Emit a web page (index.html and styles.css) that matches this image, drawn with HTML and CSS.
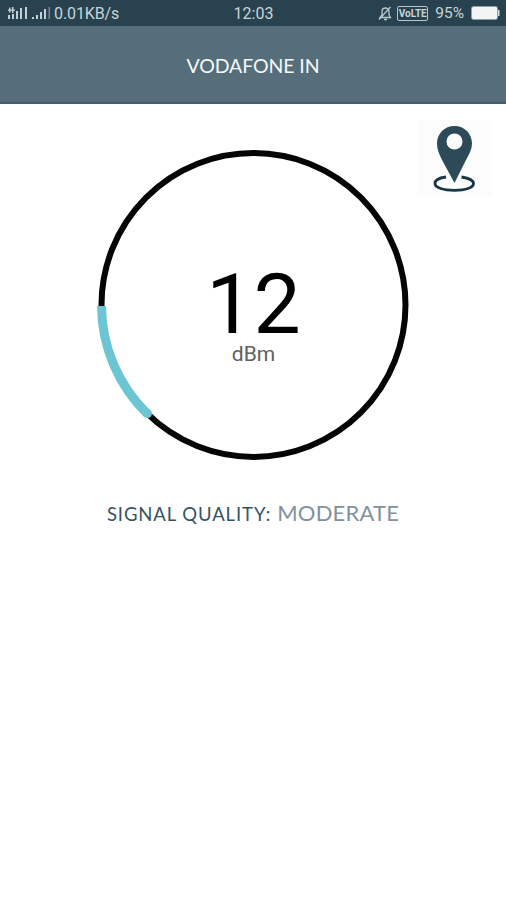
FILE: index.html
```
<!DOCTYPE html>
<html lang="en">
<head>
<meta charset="UTF-8">
<meta name="viewport" content="width=device-width, initial-scale=1.0">
<title>Signal Strength</title>
<link rel="stylesheet" href="styles.css">
</head>
<body>

<div class="status-bar">
  <div class="status-left">
    <svg class="signal-icons" width="43" height="14" viewBox="0 0 43 14" fill="#c3d0d5">
      <path d="M0 3.500h7v1.300H0zM1 1.500h1.500v5H1zM4 1h1.500v6H4zM0 9h2v4H0zM4 8h2v5H4zM8 5h2v8H8zM12 2h2v11h-2zM17 1h2v12h-2z"/>
      <path d="M24 11h2v2h-2zM28 9h2v4h-2zM32 6h2v7h-2zM36 3h2v10h-2z"/>
      <path d="M40.500 1H42v12h-1.500z" fill="#718891"/>
    </svg>
    <span class="speed">0.01KB/s</span>
  </div>
  <span class="clock">12:03</span>
  <div class="status-right">
    <svg width="14" height="15" viewBox="0 0 14 15" fill="none" stroke="#b9c7cc" stroke-width="1.3">
      <path d="M2 11.500h10.500L11 9V5.500C11 3.500 9.500 2 7.500 2S4 3.500 4 5.500V9zM6 13.500h3M1 13.500L12.500 1"/>
    </svg>
    <span class="volte">VoLTE</span>
    <span class="percent">95%</span>
    <svg class="battery" width="29" height="14" viewBox="0 0 29 14">
      <rect x="0.500" y="0.500" width="26" height="13" rx="2" fill="#f3f5f5" stroke="#8fa1a8"/>
      <path d="M27 4h1.500v6H27z" fill="#d5dde0"/>
    </svg>
  </div>
</div>

<div class="header">
  <h1>VODAFONE IN</h1>
</div>

<div class="container">
  <button class="map-btn" aria-label="Map">
    <svg width="74" height="75" viewBox="0 0 74 75">
      <path d="M28 57C20 58 17 60.500 17 63.500C17 67.800 25.500 70.300 36.500 70.300S55.500 67.800 55.500 63.500C55.500 60.500 51.500 58.300 43.500 57" fill="none" stroke="#193644" stroke-width="2.8"/>
      <path fill="#2c4a57" fill-rule="evenodd" d="M36.500 6C26.500 6 19 13.800 19 23.500C19 29 21 33.500 23.500 39L36.500 63L48.500 39C51.500 33.500 54 29 54 23.500C54 13.800 46.500 6 36.500 6zM36.500 13.500a8 8 0 1 1 0 16a8 8 0 1 1 0-16z"/>
    </svg>
  </button>

  <div class="gauge">
    <svg class="gauge-ring" width="312" height="312" viewBox="0 0 312 312" fill="none">
      <circle cx="156.500" cy="156" r="152" stroke="#050505" stroke-width="6"/>
      <path d="M4.500 157A152 152 0 0 0 50.500 265" stroke="#6bc5d3" stroke-width="9"/>
      <circle cx="50.500" cy="264.500" r="4.500" fill="#6bc5d3"/>
    </svg>
    <div class="reading">
      <span class="value">12</span>
      <span class="unit">dBm</span>
    </div>
  </div>

  <div class="quality">
    <span class="quality-label">SIGNAL QUALITY:</span>
    <span class="quality-value">MODERATE</span>
  </div>
</div>

</body>
</html>
```
FILE: styles.css
```
body {
  margin: 0;
  min-height: 900px;
  background-color: #fff;
  font-family: Lato, "Open Sans", sans-serif;
}
.status-bar {
  display: grid;
  grid-template-columns: 1fr auto 1fr;
  align-items: center;
  box-sizing: border-box;
  height: 26px;
  padding: 0 6px 0 8px;
  background-color: #28434f;
  color: #c9d4d8;
  font-family: Roboto, sans-serif;
  font-size: 16px;
}
.status-left, .status-right {
  display: flex;
  align-items: center;
}
.status-right {
  justify-content: flex-end;
}
.speed {
  margin-left: 3px;
  letter-spacing: -0.1px;
}
.clock {
  margin-right: 1px;
}
.volte {
  box-sizing: border-box;
  width: 31px;
  height: 15px;
  margin-left: 5px;
  border: 1.5px solid #b9c7cc;
  border-radius: 2px;
  font-size: 10px;
  font-weight: 700;
  line-height: 13px;
  text-align: center;
}
.percent {
  margin: 0 7px;
  font-size: 15.5px;
}
.header {
  box-sizing: border-box;
  height: 78px;
  padding-top: 27px;
  background-color: #566e79;
  border-bottom: 2px solid #426069;
  text-align: center;
}
.header h1 {
  margin: 0;
  color: #f4f8f9;
  font-size: 19.5px;
  font-weight: 400;
  letter-spacing: -0.1px;
  line-height: 26px;
}
.container {
  position: relative;
  padding-top: 45px;
}
/* sits over the top right corner of the page */
.map-btn {
  position: absolute;
  top: 16px;
  right: 14px;
  padding: 0;
  border: none;
  background-color: #fcfcfc;
  cursor: pointer;
}
.map-btn svg {
  display: block;
}
.gauge {
  display: grid;
  width: 312px;
  height: 312px;
  margin: 0 auto;
}
.gauge-ring, .reading {
  grid-area: 1 / 1;
}
.reading {
  display: flex;
  flex-direction: column;
  align-items: center;
  padding: 118px 0 0 1px;
  font-family: Roboto, sans-serif;
}
.value {
  color: #000;
  font-size: 84px;
  line-height: 76px;
}
.unit {
  color: #606060;
  font-size: 21px;
  line-height: 22px;
}
.quality {
  display: flex;
  justify-content: center;
  align-items: baseline;
  gap: 6px;
  margin-top: 37px;
  line-height: 30px;
}
.quality-label {
  color: #36545f;
  font-size: 18.5px;
  letter-spacing: 0.9px;
}
.quality-value {
  color: #82929a;
  font-size: 22px;
  letter-spacing: 0.2px;
}
```
